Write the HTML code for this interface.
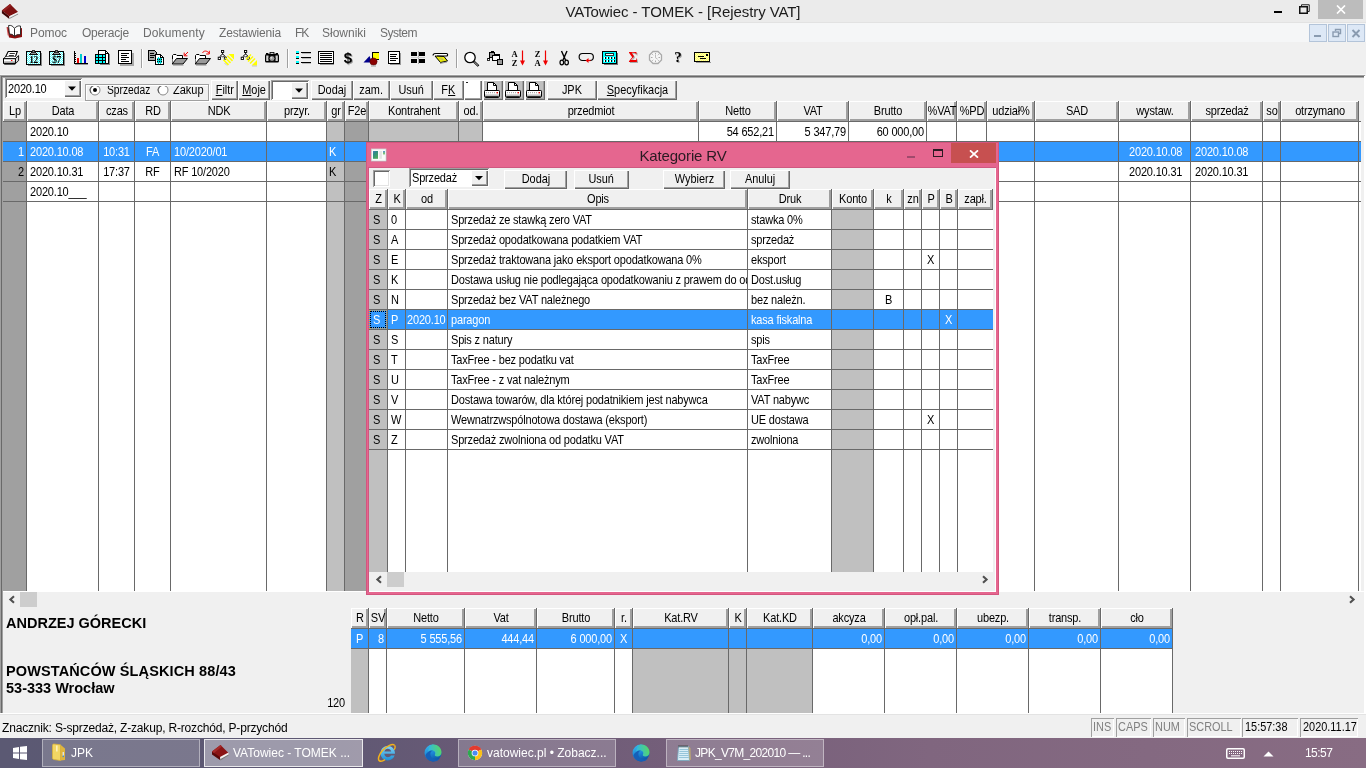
<!DOCTYPE html><html lang="pl"><head><meta charset="utf-8"><title>VATowiec - TOMEK - [Rejestry VAT]</title><style>
*{box-sizing:border-box;margin:0;padding:0}
html,body{width:1366px;height:768px;overflow:hidden;background:#f0f0f0}
body{font-family:"Liberation Sans",sans-serif;font-size:11px;color:#000;position:relative;letter-spacing:-0.18px}
#root{position:absolute;left:0;top:0;width:1366px;height:768px;overflow:hidden;will-change:transform}
.a{position:absolute;white-space:nowrap}
.t{position:absolute;white-space:nowrap;line-height:13px;height:13px}
.hd{position:absolute;background:#f0f0f0;box-shadow:inset 0 -1px 0 #696969,inset -1px 0 0 #696969,inset 1px 1px 0 #fff,inset -3px -3px 0 #a0a0a0;text-align:center;white-space:nowrap;overflow:hidden;line-height:13px;padding-top:3px;height:21px}
.btn{position:absolute;background:#f0f0f0;box-shadow:inset 1px 1px 0 #fff,inset -1px -1px 0 #696969,inset -2px -2px 0 #a0a0a0;text-align:center;white-space:nowrap;overflow:hidden;line-height:14px;font-size:13px;letter-spacing:0}
.btn b{font-weight:normal;display:inline-block;transform:scaleX(0.84);transform-origin:50% 50%}
.nx{display:inline-block;transform:scaleX(0.84);transform-origin:0 50%}
.sunk{position:absolute;background:#fff;box-shadow:inset 1px 1px 0 #a0a0a0,inset -1px -1px 0 #fff,inset 2px 2px 0 #696969,inset -2px -2px 0 #e3e3e3}
.s{transform:scaleY(1.1);transform-origin:0 0}
.hd span{display:inline-block;transform:scaleY(1.1);transform-origin:50% 0}
.vl{position:absolute;width:1px;background:#696969}
.hl{position:absolute;height:1px;background:#696969}
.w{color:#fff}
u{text-decoration:underline}
.seg{font-family:"Liberation Sans",sans-serif}
</style></head><body><div id="root">
<div class="a" style="left:0px;top:0px;width:1366px;height:22px;background:#ebebeb;"></div>
<div class="a" style="left:0px;top:22px;width:1366px;height:1px;background:#e2e2e2;"></div>
<svg class="a" style="left:0px;top:0px" width="21" height="21" viewBox="0 0 21 21">
<polygon points="1.9,10.6 10,4 18.1,11.9 9.4,16.3" fill="#7d1111"/>
<polygon points="1.9,10.6 10,4 11.5,5.4 3.6,11.9" fill="#932020"/>
<polygon points="1.9,10.6 9.4,16.3 9.4,18.9 1.9,13.2" fill="#3d0404"/>
<polygon points="9.4,16.3 18.1,11.9 18.1,14.4 9.4,18.9" fill="#f2f2f2"/>
<polygon points="9.4,17.9 18.1,13.5 18.1,14.5 9.4,19" fill="#8c8c8c"/>
</svg>
<div class="a" style="left:383px;width:600px;top:2px;height:20px;line-height:20px;text-align:center;font-size:15px;color:#1c1c1c;letter-spacing:-0.08px">VATowiec - TOMEK - [Rejestry VAT]</div>
<div class="a" style="left:1274px;top:11px;width:8px;height:2px;background:#000;"></div>
<svg class="a" style="left:1299px;top:4px" width="11" height="10" viewBox="0 0 11 10"><path d="M2.5,2.5V0.75H10.25V7.5H8.5" fill="none" stroke="#222" stroke-width="1"/><rect x="0.75" y="2.75" width="7.5" height="6.5" fill="none" stroke="#111" stroke-width="1.5"/></svg>
<div class="a" style="left:1318px;top:0px;width:45px;height:19px;background:#bcbcbc;"></div>
<svg class="a" style="left:1336px;top:5px" width="10" height="9" viewBox="0 0 10 9"><path d="M1,0.5L9,8.5M9,0.5L1,8.5" stroke="#fff" stroke-width="1.7" fill="none"/></svg>
<div class="a" style="left:0px;top:23px;width:1366px;height:19px;background:#f5f6f7;"></div>
<svg class="a" style="left:6px;top:24px" width="17" height="15" viewBox="0 0 17 15">
<path d="M1,3 L3,13.5 L9,14.5 L16,13 L16,4 L9,6 Z" fill="#8b1010"/>
<path d="M2.5,1.5 C5,1 7,2 8.5,4.5 L8.5,12.5 C7,10.5 5,9.8 3.5,10.2 Z" fill="#fff" stroke="#222" stroke-width="0.9"/>
<path d="M14.5,2 C12,1.5 10,2.5 8.5,4.5 L8.5,12.5 C10,10.8 12,10.3 14.5,10.8 Z" fill="#fff" stroke="#222" stroke-width="0.9"/>
<path d="M1,3 L2.2,11.5" stroke="#c33" stroke-width="0.8"/>
</svg>
<div class="a" style="left:30px;top:25px;height:16px;line-height:16px;font-size:12px;color:#6d6d6d;letter-spacing:-0.08px">Pomoc</div>
<div class="a" style="left:82px;top:25px;height:16px;line-height:16px;font-size:12px;color:#6d6d6d;letter-spacing:-0.21px">Operacje</div>
<div class="a" style="left:143px;top:25px;height:16px;line-height:16px;font-size:12px;color:#6d6d6d;letter-spacing:0.14px">Dokumenty</div>
<div class="a" style="left:219px;top:25px;height:16px;line-height:16px;font-size:12px;color:#6d6d6d;letter-spacing:-0.18px">Zestawienia</div>
<div class="a" style="left:295px;top:25px;height:16px;line-height:16px;font-size:12px;color:#6d6d6d;letter-spacing:-1.15px">FK</div>
<div class="a" style="left:322px;top:25px;height:16px;line-height:16px;font-size:12px;color:#6d6d6d;letter-spacing:0.00px">Słowniki</div>
<div class="a" style="left:380px;top:25px;height:16px;line-height:16px;font-size:12px;color:#6d6d6d;letter-spacing:-0.50px">System</div>
<div class="a" style="left:1309px;top:24px;width:18px;height:18px;background:#dde8f6;border:1px solid #b3c4d9;"></div>
<div class="a" style="left:1328px;top:24px;width:18px;height:18px;background:#dde8f6;border:1px solid #b3c4d9;"></div>
<div class="a" style="left:1347px;top:24px;width:18px;height:18px;background:#dde8f6;border:1px solid #b3c4d9;"></div>
<div class="a" style="left:1314px;top:35px;width:7px;height:2px;background:#8a9bb0;"></div>
<svg class="a" style="left:1332px;top:28px" width="10" height="10" viewBox="0 0 10 10"><path d="M3.5,3V1.5H8.5V5.5H7" fill="none" stroke="#8a9bb0" stroke-width="1.4"/><rect x="1" y="4" width="5.5" height="4.5" fill="none" stroke="#8a9bb0" stroke-width="1.4"/></svg>
<svg class="a" style="left:1351px;top:29px" width="10" height="9" viewBox="0 0 10 9"><path d="M1.5,1L8.5,8M8.5,1L1.5,8" stroke="#8a9bb0" stroke-width="1.9" fill="none"/></svg>
<svg class="a" style="left:3px;top:50px" width="17" height="16" viewBox="0 0 17 16"><path d="M5.2,1.5H14.3L12.4,6.8H2.6Z" fill="#fff" stroke="#000" stroke-width="1.1"/><path d="M6.6,3.5H11.8M5.8,5.5H10.9" stroke="#333" stroke-width="1"/>
<path d="M2.6,6.8L0.5,8.7H12.4L14.3,6.8" fill="#fff" stroke="#000" stroke-width="0.9"/>
<path d="M12.4,8.7L15.6,5.6V10.6L12.4,13.7Z" fill="#d4d4d4" stroke="#000" stroke-width="0.9"/>
<rect x="0.5" y="8.7" width="11.9" height="4.6" fill="#fff" stroke="#000" stroke-width="1"/>
<path d="M1.2,12H11.8" stroke="#777" stroke-width="0.9"/><rect x="8" y="10" width="1.4" height="1" fill="#e00"/>
<path d="M1.2,13.9H12.2" stroke="#000" stroke-width="1.5"/></svg>
<svg class="a" style="left:0;top:0" width="0" height="0"><defs><pattern id="dots" width="2" height="2" patternUnits="userSpaceOnUse"><rect width="1" height="1" fill="#fff"/><rect x="1" y="1" width="1" height="1" fill="#fff"/></pattern></defs></svg>
<svg class="a" style="left:26px;top:50px" width="16" height="16" viewBox="0 0 16 16" shape-rendering="crispEdges"><rect x="2" y="15" width="14" height="1" fill="#888"/><rect x="15" y="3" width="1" height="13" fill="#888"/><rect x="0.5" y="1.5" width="14" height="13" rx="1" fill="#5ff" stroke="#000" stroke-width="1.2"/><rect x="1" y="2" width="13" height="12" fill="url(#dots)"/>
<path d="M3.8,4.5L6.3,1.8H8.7L11.2,4.5Z" fill="#999" stroke="#000" stroke-width="0.9"/><rect x="6.3" y="0.4" width="2.4" height="1.6" fill="#999" stroke="#000" stroke-width="0.7"/>
<text x="7.5" y="12.8" font-family="Liberation Serif,serif" font-weight="bold" font-size="9.5" text-anchor="middle" fill="#000" style="letter-spacing:-0.4px">12</text></svg>
<svg class="a" style="left:49px;top:50px" width="16" height="16" viewBox="0 0 16 16" shape-rendering="crispEdges"><rect x="2" y="15" width="14" height="1" fill="#888"/><rect x="15" y="3" width="1" height="13" fill="#888"/><rect x="0.5" y="1.5" width="14" height="13" rx="1" fill="#5ff" stroke="#000" stroke-width="1.2"/><rect x="1" y="2" width="13" height="12" fill="url(#dots)"/>
<path d="M3.8,4.5L6.3,1.8H8.7L11.2,4.5Z" fill="#999" stroke="#000" stroke-width="0.9"/><rect x="6.3" y="0.4" width="2.4" height="1.6" fill="#999" stroke="#000" stroke-width="0.7"/>
<text x="7.5" y="12.8" font-family="Liberation Serif,serif" font-weight="bold" font-size="9.5" text-anchor="middle" fill="#000" style="letter-spacing:-0.4px">$7</text></svg>
<svg class="a" style="left:72px;top:50px" width="16" height="16" viewBox="0 0 16 16" shape-rendering="crispEdges"><rect x="2" y="1" width="1" height="13" fill="#000"/><rect x="2" y="13" width="14" height="1" fill="#000"/><rect x="3" y="14" width="13" height="1" fill="#999"/>
<rect x="3" y="3" width="1" height="1" fill="#000"/><rect x="3" y="5" width="1" height="1" fill="#000"/><rect x="3" y="7" width="1" height="1" fill="#000"/><rect x="3" y="9" width="1" height="1" fill="#000"/><rect x="3" y="11" width="1" height="1" fill="#000"/>
<rect x="5" y="8" width="2" height="5" fill="#e00"/><rect x="8" y="4" width="2" height="9" fill="#0cc"/><rect x="12" y="6" width="2" height="7" fill="#00c"/></svg>
<svg class="a" style="left:95px;top:50px" width="16" height="16" viewBox="0 0 16 16" shape-rendering="crispEdges"><path d="M3.5,0.5H10.5L13.5,3.5V13.5H3.5Z" fill="#fff" stroke="#000"/><path d="M10.5,0.5V3.5H13.5" fill="none" stroke="#000"/><rect x="14" y="4" width="1" height="11" fill="#888"/><rect x="5" y="14" width="10" height="1" fill="#888"/>
<rect x="0.5" y="4.5" width="10" height="9" fill="#0ff" stroke="#000"/><path d="M0.5,7.5H10.5M0.5,10.5H10.5M3.5,4.5V13.5M7.5,4.5V13.5" stroke="#000" stroke-width="1"/></svg>
<svg class="a" style="left:118px;top:50px" width="16" height="16" viewBox="0 0 16 16" shape-rendering="crispEdges"><rect x="2" y="14" width="14" height="2" fill="#aaa"/><rect x="14" y="3" width="2" height="12" fill="#aaa"/><rect x="0.5" y="0.5" width="13" height="13" fill="#fff" stroke="#000"/><path d="M3,3.5H11M3,5.5H9M3,7.5H11M3,9.5H8M3,11.5H11" stroke="#000" stroke-width="1"/></svg>
<svg class="a" style="left:148px;top:50px" width="16" height="16" viewBox="0 0 16 16" shape-rendering="crispEdges"><path d="M0.5,0.5H6.5L8.5,2.5V10.5H0.5Z" fill="#aaa" stroke="#000"/><path d="M2,3.5H6M2,5.5H7M2,7.5H6" stroke="#000"/>
<path d="M7.5,4.5H12.5L15.5,7.5V14.5H7.5Z" fill="#fff" stroke="#000"/><path d="M12.5,4.5V7.5H15.5" fill="none" stroke="#000"/><path d="M9,8.5H14M9,10.5H14M9,12.5H14M10.5,7V14M12.5,8V14" stroke="#0cc" stroke-width="1"/><path d="M9,9.5H14M9,11.5H14" stroke="#000" stroke-width="1" stroke-dasharray="1,1"/></svg>
<svg class="a" style="left:171px;top:50px" width="18" height="16" viewBox="0 0 18 16"><path d="M1.5,14V5.5L2.5,4.5H5L6,5.5H11.5V8.5" fill="#fff" stroke="#000"/><path d="M1.5,14L1.5,9L5,8.5Z" fill="#fff"/><path d="M5.5,8.5H16.5L12,14H1.2Z" fill="#9a9a9a" stroke="#000"/><path d="M2,15H12.5" stroke="#888"/><path d="M17,2L13.8,5.2M13.2,2.6V5.8H16.4" stroke="#e00" stroke-width="1" fill="none"/></svg>
<svg class="a" style="left:194px;top:50px" width="18" height="16" viewBox="0 0 18 16"><path d="M1.5,14V5.5L2.5,4.5H5L6,5.5H11.5V8.5" fill="#fff" stroke="#000"/><path d="M1.5,14L1.5,9L5,8.5Z" fill="#fff"/><path d="M5.5,8.5H16.5L12,14H1.2Z" fill="#9a9a9a" stroke="#000"/><path d="M2,15H12.5" stroke="#888"/><path d="M8.5,3C9.5,0.6 13,0.2 15,3.2M15.3,0.8V4H12.2" stroke="#e00" stroke-width="1" fill="none"/></svg>
<svg class="a" style="left:217px;top:50px" width="18" height="16" viewBox="0 0 18 16"><rect x="4.5" y="0.5" width="2.2" height="2" fill="#fff" stroke="#000" stroke-width="0.9"/><rect x="1.2" y="7.2" width="2.3" height="2.3" fill="#fff" stroke="#000" stroke-width="0.9"/><path d="M5.6,2.4V4L2.5,7M5.6,4L8.5,7" stroke="#000" fill="none" stroke-width="0.9"/><path d="M5.6,4L7.2,5.6L5.6,7.2L4,5.6Z" fill="#fff" stroke="#000" stroke-width="0.8"/><rect x="7.3" y="7.2" width="2" height="2" fill="#fff" stroke="#000" stroke-width="0.8"/><path d="M11.5,4H17V9.5Z" fill="#ff0"/><path d="M10.4,5.8L15.5,10.9M8.4,7.8L13.5,12.9M6.4,9.8L11.5,14.9" stroke="#ff0" stroke-width="1.5"/><path d="M7.5,13L10,15.5" stroke="#bbb" stroke-width="0.8"/></svg>
<svg class="a" style="left:240px;top:50px" width="18" height="17" viewBox="0 0 18 17"><rect x="4.5" y="0.5" width="2.2" height="2" fill="#fff" stroke="#000" stroke-width="0.9"/><rect x="1.2" y="7.2" width="2.3" height="2.3" fill="#fff" stroke="#000" stroke-width="0.9"/><path d="M5.6,2.4V4L2.5,7M5.6,4L8.5,7" stroke="#000" fill="none" stroke-width="0.9"/><path d="M5.6,4L7.2,5.6L5.6,7.2L4,5.6Z" fill="#fff" stroke="#000" stroke-width="0.8"/><rect x="7.3" y="7.2" width="2" height="2" fill="#fff" stroke="#000" stroke-width="0.8"/><path d="M17,10V15.5H11.5Z" fill="#ff0"/><path d="M10,13.5L15,8.5M8,11.5L13,6.5M6,9.5L11,4.5" stroke="#ff0" stroke-width="1.5"/><path d="M12,16H17" stroke="#bbb" stroke-width="0.8"/></svg>
<svg class="a" style="left:264px;top:50px" width="16" height="16" viewBox="0 0 16 16"><rect x="1" y="4" width="14" height="8.5" rx="1.5" fill="#000"/><rect x="5.5" y="2" width="5" height="3" rx="0.8" fill="#000"/><rect x="2" y="3" width="2.4" height="1.5" fill="#000"/><rect x="11.6" y="3" width="2.4" height="1.5" fill="#000"/><rect x="2.2" y="5.5" width="2.3" height="5.5" fill="#d0d0d0"/><rect x="11.5" y="5.5" width="2.3" height="5.5" fill="#d0d0d0"/><circle cx="8" cy="8.5" r="3" fill="#9a9a9a" stroke="#000"/><circle cx="7.3" cy="7.7" r="1" fill="#ddd"/><rect x="6.5" y="2.8" width="3" height="1.2" fill="#ccc"/></svg>
<svg class="a" style="left:295px;top:50px" width="16" height="16" viewBox="0 0 16 16" shape-rendering="crispEdges"><rect x="1" y="1" width="3" height="3" fill="#0ff"/><rect x="1" y="6" width="3" height="3" fill="#0ff"/><rect x="1" y="11" width="3" height="3" fill="#0ff"/><rect x="1" y="3" width="3" height="1" fill="#000"/><rect x="1" y="8" width="3" height="1" fill="#000"/><rect x="1" y="13" width="3" height="1" fill="#000"/>
<rect x="6" y="2" width="10" height="1" fill="#000"/><rect x="6" y="7" width="10" height="1" fill="#000"/><rect x="6" y="12" width="10" height="1" fill="#000"/><rect x="7" y="3" width="9" height="1" fill="#bbb"/><rect x="7" y="8" width="9" height="1" fill="#bbb"/><rect x="7" y="13" width="9" height="1" fill="#bbb"/></svg>
<svg class="a" style="left:318px;top:50px" width="16" height="16" viewBox="0 0 16 16" shape-rendering="crispEdges"><rect x="0.5" y="1.5" width="15" height="12" rx="1" fill="#fff" stroke="#000"/><path d="M2,3.5H14M2,5.5H14M2,7.5H14M2,9.5H14M2,11.5H14" stroke="#000"/><rect x="2" y="14" width="14" height="1" fill="#999"/></svg>
<div class="a" style="left:341px;top:48px;width:14px;height:20px;line-height:20px;font-size:15px;font-weight:bold;text-align:center;letter-spacing:0;color:#000;text-shadow:1px 1px 0 #999">$</div>
<svg class="a" style="left:363px;top:51px" width="16" height="16" viewBox="0 0 16 16"><rect x="9.5" y="1.5" width="7" height="7" fill="#ff0" stroke="#000"/><path d="M0.5,11.5L6.5,5L9,11.5Z" fill="#00008b"/><circle cx="10.5" cy="10.5" r="3.6" fill="#8b0000" stroke="#500" stroke-width="0.6"/><path d="M8,15L13,15" stroke="#999"/></svg>
<svg class="a" style="left:386px;top:50px" width="16" height="16" viewBox="0 0 16 16" shape-rendering="crispEdges"><rect x="14" y="3" width="1" height="12" fill="#999"/><rect x="4" y="14" width="11" height="1" fill="#999"/><rect x="2.5" y="1.5" width="11" height="12" fill="#fff" stroke="#000" stroke-width="1.4"/><path d="M4,4.5H11M4,6.5H10M4,8.5H12M4,10.5H10" stroke="#000"/></svg>
<svg class="a" style="left:409px;top:50px" width="16" height="16" viewBox="0 0 16 16" shape-rendering="crispEdges"><rect x="2" y="2" width="6" height="4" fill="#000"/><rect x="10" y="2" width="6" height="4" fill="#000"/><rect x="2" y="9" width="6" height="4" fill="#000"/><rect x="10" y="9" width="6" height="4" fill="#000"/><rect x="9" y="1" width="1" height="13" fill="#aaa"/><rect x="2" y="7" width="14" height="1" fill="#ccc"/></svg>
<svg class="a" style="left:431px;top:50px" width="18" height="16" viewBox="0 0 18 16"><path d="M2,5.5C2,3.5 4,3.5 5,3.5H15.5C17,3.5 17,6 15.5,6H6" fill="#fff" stroke="#000" stroke-width="1.2"/><path d="M4,6L13,6.5L16.5,11L9.5,12.5Z" fill="#ee0" stroke="#000" stroke-width="1"/><path d="M8,8L12,10M10,7.5L13,10.5" stroke="#aa8" stroke-width="0.8"/><path d="M9,13.5L16,12" stroke="#999"/></svg>
<svg class="a" style="left:462px;top:51px" width="18" height="16" viewBox="0 0 18 16"><circle cx="8" cy="6.5" r="5.2" fill="#fff" stroke="#000" stroke-width="1.3"/><path d="M11.8,10.5L16.5,15" stroke="#000" stroke-width="2.4"/><path d="M12.3,11L16,14.5" stroke="#fff" stroke-width="0.8"/></svg>
<svg class="a" style="left:487px;top:50px" width="18" height="16" viewBox="0 0 18 16" shape-rendering="crispEdges"><path d="M1.5,9.5V8.5H2.5M4,4.5H12.5V9" fill="none" stroke="#000"/><rect x="2.5" y="2.5" width="5" height="5" fill="#999" stroke="#000"/><rect x="4" y="1" width="3" height="1" fill="#000"/><rect x="5.5" y="5.5" width="7" height="5" fill="#fff" stroke="#000"/><rect x="10.5" y="9.5" width="5" height="5" fill="#999" stroke="#000"/><rect x="0.5" y="8.5" width="2" height="2" fill="#fff" stroke="#000" stroke-width="0.8"/></svg>
<svg class="a" style="left:510px;top:50px" width="16" height="16" viewBox="0 0 16 16"><text x="4.5" y="7" font-family="Liberation Serif,serif" font-weight="bold" font-size="8.5" text-anchor="middle">A</text><text x="4.5" y="15.5" font-family="Liberation Serif,serif" font-weight="bold" font-size="8.5" text-anchor="middle">Z</text><path d="M12.5,0.5V14" stroke="#e00" stroke-width="1.2"/><path d="M10,10.5H15L12.5,15.5Z" fill="#e00"/></svg>
<svg class="a" style="left:533px;top:50px" width="16" height="16" viewBox="0 0 16 16"><text x="4.5" y="7" font-family="Liberation Serif,serif" font-weight="bold" font-size="8.5" text-anchor="middle">Z</text><text x="4.5" y="15.5" font-family="Liberation Serif,serif" font-weight="bold" font-size="8.5" text-anchor="middle">A</text><path d="M12.5,0.5V14" stroke="#e00" stroke-width="1.2"/><path d="M10,10.5H15L12.5,15.5Z" fill="#e00"/></svg>
<svg class="a" style="left:556px;top:50px" width="16" height="16" viewBox="0 0 16 16"><path d="M5.5,1L9.5,10M11,1L7,10" stroke="#000" stroke-width="1.4" fill="none"/><ellipse cx="5.8" cy="12.5" rx="1.8" ry="2.3" fill="none" stroke="#000" stroke-width="1.2"/><ellipse cx="10.6" cy="12.5" rx="1.8" ry="2.3" fill="none" stroke="#000" stroke-width="1.2"/></svg>
<svg class="a" style="left:578px;top:50px" width="18" height="16" viewBox="0 0 18 16"><path d="M8,10.5H4.5C0,10.5 0,3.5 4.5,3.5H12C16.5,3.5 16.5,10.5 12,10.5" fill="none" stroke="#000" stroke-width="1.15"/><path d="M12.5,10.5H9" stroke="#e00" stroke-width="1.3"/><path d="M10.5,8L7.5,10.5L10.5,13Z" fill="#e00"/></svg>
<svg class="a" style="left:602px;top:50px" width="16" height="16" viewBox="0 0 16 16" shape-rendering="crispEdges"><rect x="2" y="14" width="14" height="1" fill="#777"/><rect x="15" y="3" width="1" height="12" fill="#777"/><rect x="0.5" y="1.5" width="14" height="12" fill="#0ff" stroke="#000" stroke-width="1.4"/><rect x="3.5" y="3.5" width="8" height="2" fill="#fff" stroke="#000" stroke-width="0.8"/>
<g fill="#000"><rect x="3" y="7" width="1" height="2"/><rect x="6" y="7" width="1" height="2"/><rect x="9" y="7" width="1" height="2"/><rect x="12" y="7" width="1" height="2"/><rect x="3" y="10" width="1" height="2"/><rect x="6" y="10" width="1" height="2"/><rect x="9" y="10" width="1" height="2"/><rect x="12" y="10" width="1" height="2"/></g>
<g fill="#fff"><rect x="2" y="7" width="1" height="2"/><rect x="5" y="7" width="1" height="2"/><rect x="8" y="7" width="1" height="2"/><rect x="11" y="7" width="1" height="2"/><rect x="2" y="10" width="1" height="2"/><rect x="5" y="10" width="1" height="2"/><rect x="8" y="10" width="1" height="2"/><rect x="11" y="10" width="1" height="2"/></g></svg>
<div class="a" style="left:626px;top:47px;width:14px;height:22px;line-height:22px;font-size:14px;font-weight:bold;font-family:'Liberation Serif',serif;text-align:center;letter-spacing:0;color:#e00;text-shadow:1px 1px 0 #aaa">Σ</div>
<svg class="a" style="left:648px;top:50px" width="16" height="16" viewBox="0 0 16 16"><path d="M5,1.5H10L13.5,5V10L10,13.5H5L1.5,10V5Z" fill="#f6f6f6" stroke="#aaa" stroke-width="1.3"/><path d="M7.5,3V4.5M7.5,10.5V12M3,7.5H4.5M10.5,7.5H12M4.3,4.3L5.2,5.2M10.7,4.3L9.8,5.2M4.3,10.7L5.2,9.8M10.7,10.7L9.8,9.8" stroke="#aaa"/><path d="M7.5,5V7.8L9.5,9" stroke="#bbb" fill="none"/></svg>
<div class="a" style="left:671px;top:47px;width:14px;height:20px;line-height:20px;font-size:15px;font-weight:bold;font-family:'Liberation Serif',serif;text-align:center;letter-spacing:0;color:#000;text-shadow:1px 1px 0 #aaa">?</div>
<svg class="a" style="left:694px;top:52px" width="18" height="12" viewBox="0 0 18 12" shape-rendering="crispEdges"><rect x="2" y="10" width="15" height="1" fill="#999"/><rect x="0.5" y="0.5" width="15" height="9" fill="#ff6" stroke="#000" stroke-width="1.4"/><rect x="1" y="1" width="14" height="8" fill="url(#dots)" opacity="0.5"/><rect x="12" y="2" width="2" height="2" fill="#000"/><path d="M4,4.5H10M6,6.5H12" stroke="#000"/></svg>
<div class="a" style="left:141px;top:49px;width:1px;height:19px;background:#a0a0a0;"></div>
<div class="a" style="left:142px;top:49px;width:1px;height:19px;background:#fff;"></div>
<div class="a" style="left:287px;top:49px;width:1px;height:19px;background:#a0a0a0;"></div>
<div class="a" style="left:288px;top:49px;width:1px;height:19px;background:#fff;"></div>
<div class="a" style="left:456px;top:49px;width:1px;height:19px;background:#a0a0a0;"></div>
<div class="a" style="left:457px;top:49px;width:1px;height:19px;background:#fff;"></div>
<div class="a" style="left:0px;top:74px;width:1366px;height:1px;background:#f8f8f8;"></div>
<div class="a" style="left:0px;top:75px;width:1365px;height:1px;background:#a0a0a0;"></div>
<div class="a" style="left:1px;top:76px;width:1364px;height:1px;background:#696969;"></div>
<div class="a" style="left:2px;top:77px;width:1362px;height:1px;background:#a8a8a8;"></div>
<div class="a" style="left:0px;top:75px;width:1px;height:638px;background:#a0a0a0;"></div>
<div class="a" style="left:1px;top:76px;width:1px;height:637px;background:#696969;"></div>
<div class="a" style="left:1364px;top:76px;width:2px;height:638px;background:#fff;"></div>
<div class="a" style="left:0px;top:713px;width:1366px;height:1px;background:#fff;"></div>
<div class="a" style="left:0px;top:714px;width:1366px;height:1px;background:#e3e3e3;"></div>
<div class="a" style="left:2px;top:77px;width:1px;height:636px;background:#a0a0a0;"></div>
<div class="a" style="left:5px;top:78px;width:77px;height:20px;background:#fff;box-shadow:inset 1px 1px 0 #a0a0a0,inset -1px -1px 0 #fff,inset 2px 2px 0 #696969"></div>
<div class="btn" style="left:64px;top:80px;width:17px;height:17px"></div>
<svg class="a" style="left:64px;top:80px" width="17" height="17" viewBox="0 0 17 17"><polygon points="4.0,6.5 12.0,6.5 8.0,10.8" fill="#000"/></svg>
<div class="t s" style="left:8px;top:82px">2020.10</div>
<div class="a" style="left:85px;top:84px;width:124px;height:17px;border:1px solid #a0a0a0;box-shadow:inset 1px 1px 0 #fff,1px 1px 0 #fff;"></div>
<div class="a" style="left:87px;top:86px;width:120px;height:13px;overflow:hidden">
<svg class="a" style="left:2px;top:-2px" width="12" height="12" viewBox="0 0 12 12"><circle cx="6" cy="6" r="5" fill="#fff" stroke="#888" stroke-width="1"/><path d="M2.2,9.2A5,5 0 0 1 9.2,2.2" fill="none" stroke="#555" stroke-width="1"/><circle cx="6" cy="6" r="2" fill="#000"/></svg>
<div class="t" style="left:20px;top:-2.5px;font-size:12.5px;letter-spacing:0"><span class="nx" style="transform:scaleX(0.82)">Sprzedaż</span></div>
<svg class="a" style="left:70px;top:-2px" width="12" height="12" viewBox="0 0 12 12"><circle cx="6" cy="6" r="5" fill="#fff" stroke="#888" stroke-width="1"/><path d="M2.2,9.2A5,5 0 0 1 9.2,2.2" fill="none" stroke="#555" stroke-width="1"/></svg>
<div class="t" style="left:86px;top:-2.5px;font-size:12.5px;letter-spacing:0"><span class="nx" style="transform:scaleX(0.88)">Zakup</span></div>
</div>
<div class="btn" style="left:211px;top:80px;width:27px;height:20px;padding-top:3px"><b><u>F</u>iltr</b></div>
<div class="btn" style="left:238px;top:80px;width:32px;height:20px;padding-top:3px"><b><u>M</u>oje</b></div>
<div class="a" style="left:271px;top:80px;width:38px;height:20px;background:#fff;box-shadow:inset 1px 1px 0 #a0a0a0,inset -1px -1px 0 #fff,inset 2px 2px 0 #696969"></div>
<div class="btn" style="left:291px;top:82px;width:17px;height:17px"></div>
<svg class="a" style="left:291px;top:82px" width="17" height="17" viewBox="0 0 17 17"><polygon points="4.0,6.5 12.0,6.5 8.0,10.8" fill="#000"/></svg>
<div class="btn" style="left:311px;top:80px;width:42px;height:20px;padding-top:3px"><b>Dodaj</b></div>
<div class="btn" style="left:353px;top:80px;width:37px;height:20px;padding-top:3px"><b>zam.</b></div>
<div class="btn" style="left:390px;top:80px;width:43px;height:20px;padding-top:3px"><b>Usuń</b></div>
<div class="btn" style="left:433px;top:80px;width:31px;height:20px;padding-top:3px"><b>F<u>K</u></b></div>
<div class="btn" style="left:464px;top:80px;width:18px;height:20px;background:#fff"></div>
<div class="a" style="left:466px;top:82px;width:2px;height:1px;background:#222;"></div>
<div class="btn" style="left:483px;top:80px;width:20px;height:20px;background:#c0c0c0"></div>
<svg class="a" style="left:483px;top:81px" width="18" height="18" viewBox="0 0 18 18"><path d="M4.5,9.5V1.5H10.5L13.5,4.5V9.5" fill="#fff" stroke="#000" stroke-width="1"/><path d="M10.5,1.5V4.5H13.5" fill="none" stroke="#000" stroke-width="1"/><rect x="1.5" y="9.5" width="15" height="6.5" rx="0.8" fill="#c0c0c0" stroke="#000" stroke-width="1"/><rect x="2" y="10" width="14" height="3.4" fill="#fff"/><path d="M3,11.7H13.5" stroke="#aaa" stroke-width="1.2" stroke-dasharray="1,1"/><rect x="13.6" y="11" width="1.4" height="1.4" fill="#e00"/><path d="M2.5,16.2H15.5" stroke="#000" stroke-width="1.4"/></svg>
<div class="btn" style="left:504px;top:80px;width:20px;height:20px;background:#c0c0c0"></div>
<svg class="a" style="left:504px;top:81px" width="18" height="18" viewBox="0 0 18 18"><path d="M4.5,9.5V1.5H10.5L13.5,4.5V9.5" fill="#fff" stroke="#000" stroke-width="1"/><path d="M10.5,1.5V4.5H13.5" fill="none" stroke="#000" stroke-width="1"/><rect x="1.5" y="9.5" width="15" height="6.5" rx="0.8" fill="#c0c0c0" stroke="#000" stroke-width="1"/><rect x="2" y="10" width="14" height="3.4" fill="#fff"/><path d="M3,11.7H13.5" stroke="#aaa" stroke-width="1.2" stroke-dasharray="1,1"/><rect x="13.6" y="11" width="1.4" height="1.4" fill="#e00"/><path d="M2.5,16.2H15.5" stroke="#000" stroke-width="1.4"/></svg>
<div class="btn" style="left:525px;top:80px;width:20px;height:20px;background:#c0c0c0"></div>
<svg class="a" style="left:525px;top:81px" width="18" height="18" viewBox="0 0 18 18"><path d="M4.5,9.5V1.5H10.5L13.5,4.5V9.5" fill="#fff" stroke="#000" stroke-width="1"/><path d="M10.5,1.5V4.5H13.5" fill="none" stroke="#000" stroke-width="1"/><rect x="1.5" y="9.5" width="15" height="6.5" rx="0.8" fill="#c0c0c0" stroke="#000" stroke-width="1"/><rect x="2" y="10" width="14" height="3.4" fill="#fff"/><path d="M3,11.7H13.5" stroke="#aaa" stroke-width="1.2" stroke-dasharray="1,1"/><rect x="13.6" y="11" width="1.4" height="1.4" fill="#e00"/><path d="M2.5,16.2H15.5" stroke="#000" stroke-width="1.4"/></svg>
<div class="btn" style="left:547px;top:80px;width:50px;height:20px;padding-top:3px"><b>JPK</b></div>
<div class="btn" style="left:597px;top:80px;width:80px;height:20px;padding-top:3px"><b><u>S</u>pecyfikacja</b></div>
<div class="a" style="left:3px;top:101px;width:1358px;height:490px;background:#fff;"></div>
<div class="a" style="left:3px;top:122px;width:23px;height:469px;background:#a0a0a0;"></div>
<div class="a" style="left:327px;top:122px;width:17px;height:469px;background:#c0c0c0;"></div>
<div class="a" style="left:345px;top:122px;width:23px;height:469px;background:#a0a0a0;"></div>
<div class="a" style="left:369px;top:122px;width:89px;height:469px;background:#c0c0c0;"></div>
<div class="a" style="left:459px;top:122px;width:23px;height:469px;background:#c0c0c0;"></div>
<div class="a" style="left:3px;top:142px;width:1358px;height:19px;background:#3399ff;"></div>
<div class="vl" style="left:26px;top:121px;height:470px"></div>
<div class="vl" style="left:98px;top:121px;height:470px"></div>
<div class="vl" style="left:134px;top:121px;height:470px"></div>
<div class="vl" style="left:170px;top:121px;height:470px"></div>
<div class="vl" style="left:266px;top:121px;height:470px"></div>
<div class="vl" style="left:326px;top:121px;height:470px"></div>
<div class="vl" style="left:344px;top:121px;height:470px"></div>
<div class="vl" style="left:368px;top:121px;height:470px"></div>
<div class="vl" style="left:458px;top:121px;height:470px"></div>
<div class="vl" style="left:482px;top:121px;height:470px"></div>
<div class="vl" style="left:698px;top:121px;height:470px"></div>
<div class="vl" style="left:776px;top:121px;height:470px"></div>
<div class="vl" style="left:848px;top:121px;height:470px"></div>
<div class="vl" style="left:926px;top:121px;height:470px"></div>
<div class="vl" style="left:956px;top:121px;height:470px"></div>
<div class="vl" style="left:986px;top:121px;height:470px"></div>
<div class="vl" style="left:1034px;top:121px;height:470px"></div>
<div class="vl" style="left:1118px;top:121px;height:470px"></div>
<div class="vl" style="left:1190px;top:121px;height:470px"></div>
<div class="vl" style="left:1262px;top:121px;height:470px"></div>
<div class="vl" style="left:1280px;top:121px;height:470px"></div>
<div class="vl" style="left:1358px;top:121px;height:470px"></div>
<div class="hl" style="left:3px;top:121px;width:1358px"></div>
<div class="hl" style="left:3px;top:141px;width:1358px"></div>
<div class="hl" style="left:3px;top:161px;width:1358px"></div>
<div class="hl" style="left:3px;top:181px;width:1358px"></div>
<div class="hl" style="left:3px;top:201px;width:1358px"></div>
<div class="hd" style="left:3px;top:101px;width:24px"><span>Lp</span></div>
<div class="hd" style="left:27px;top:101px;width:72px"><span>Data</span></div>
<div class="hd" style="left:99px;top:101px;width:36px"><span>czas</span></div>
<div class="hd" style="left:135px;top:101px;width:36px"><span>RD</span></div>
<div class="hd" style="left:171px;top:101px;width:96px"><span>NDK</span></div>
<div class="hd" style="left:267px;top:101px;width:60px"><span>przyr.</span></div>
<div class="hd" style="left:327px;top:101px;width:18px"><span>gr</span></div>
<div class="hd" style="left:345px;top:101px;width:24px"><span>F2e</span></div>
<div class="hd" style="left:369px;top:101px;width:90px"><span>Kontrahent</span></div>
<div class="hd" style="left:459px;top:101px;width:24px"><span>od.</span></div>
<div class="hd" style="left:483px;top:101px;width:216px"><span>przedmiot</span></div>
<div class="hd" style="left:699px;top:101px;width:78px"><span>Netto</span></div>
<div class="hd" style="left:777px;top:101px;width:72px"><span>VAT</span></div>
<div class="hd" style="left:849px;top:101px;width:78px"><span>Brutto</span></div>
<div class="hd" style="left:927px;top:101px;width:30px"><span>%VAT</span></div>
<div class="hd" style="left:957px;top:101px;width:30px"><span>%PD</span></div>
<div class="hd" style="left:987px;top:101px;width:48px"><span>udział%</span></div>
<div class="hd" style="left:1035px;top:101px;width:84px"><span>SAD</span></div>
<div class="hd" style="left:1119px;top:101px;width:72px"><span>wystaw.</span></div>
<div class="hd" style="left:1191px;top:101px;width:72px"><span>sprzedaż</span></div>
<div class="hd" style="left:1263px;top:101px;width:18px"><span>so</span></div>
<div class="hd" style="left:1281px;top:101px;width:78px"><span>otrzymano</span></div>
<div class="a" style="left:1359px;top:101px;width:2px;height:20px;background:#f0f0f0;"></div>
<div class="t s" style="left:30px;top:125px;">2020.10</div>
<div class="t s" style="right:592px;top:125px;">54 652,21</div>
<div class="t s" style="right:520px;top:125px;">5 347,79</div>
<div class="t s" style="right:442px;top:125px;">60 000,00</div>
<div class="t s" style="right:1342px;top:145px;color:#fff;">1</div>
<div class="t s" style="left:30px;top:145px;color:#fff;">2020.10.08</div>
<div class="t s" style="left:-33.5px;width:300px;text-align:center;top:145px;color:#fff;">10:31</div>
<div class="t s" style="left:2.5px;width:300px;text-align:center;top:145px;color:#fff;">FA</div>
<div class="t s" style="left:174px;top:145px;color:#fff;">10/2020/01</div>
<div class="t s" style="left:329px;top:145px;color:#fff;">K</div>
<div class="t s" style="left:1129px;top:145px;color:#fff;">2020.10.08</div>
<div class="t s" style="left:1195px;top:145px;color:#fff;">2020.10.08</div>
<div class="t s" style="right:1342px;top:165px;">2</div>
<div class="t s" style="left:30px;top:165px;">2020.10.31</div>
<div class="t s" style="left:-33.5px;width:300px;text-align:center;top:165px;">17:37</div>
<div class="t s" style="left:2.5px;width:300px;text-align:center;top:165px;">RF</div>
<div class="t s" style="left:174px;top:165px;">RF 10/2020</div>
<div class="t s" style="left:329px;top:165px;">K</div>
<div class="t s" style="left:1129px;top:165px;">2020.10.31</div>
<div class="t s" style="left:1195px;top:165px;">2020.10.31</div>
<div class="t s" style="left:30px;top:185px;">2020.10___</div>
<div class="a" style="left:3px;top:591px;width:1361px;height:1px;background:#fff;"></div>
<div class="a" style="left:3px;top:592px;width:1361px;height:16px;background:#f0f0f0;"></div>
<div class="a" style="left:20px;top:592px;width:17px;height:15px;background:#cdcdcd;"></div>
<svg class="a" style="left:8px;top:595px" width="8" height="9" viewBox="0 0 8 9"><path d="M6,1.2L2.4,4.5L6,7.8" fill="none" stroke="#505050" stroke-width="2.1"/></svg>
<svg class="a" style="left:1348px;top:595px" width="8" height="9" viewBox="0 0 8 9"><path d="M2,1.2L5.6,4.5L2,7.8" fill="none" stroke="#505050" stroke-width="2.1"/></svg>
<div class="t" style="left:6px;top:615px;font-weight:bold;font-size:14.5px;line-height:16px;height:16px;letter-spacing:0;">ANDRZEJ GÓRECKI</div>
<div class="t" style="left:6px;top:663px;font-weight:bold;font-size:14.5px;line-height:16px;height:16px;letter-spacing:0;letter-spacing:0.12px;">POWSTAŃCÓW ŚLĄSKICH 88/43</div>
<div class="t" style="left:6px;top:680px;font-weight:bold;font-size:14.5px;line-height:16px;height:16px;letter-spacing:0;">53-333 Wrocław</div>
<div class="t s" style="right:1021px;top:696px;">120</div>
<div class="a" style="left:351px;top:608px;width:822px;height:105px;background:#fff;"></div>
<div class="a" style="left:351px;top:629px;width:17px;height:84px;background:#c0c0c0;"></div>
<div class="a" style="left:633px;top:629px;width:95px;height:84px;background:#c0c0c0;"></div>
<div class="a" style="left:729px;top:629px;width:17px;height:84px;background:#c0c0c0;"></div>
<div class="a" style="left:747px;top:629px;width:65px;height:84px;background:#c0c0c0;"></div>
<div class="a" style="left:351px;top:629px;width:821px;height:19px;background:#3399ff;"></div>
<div class="vl" style="left:368px;top:628px;height:85px"></div>
<div class="vl" style="left:386px;top:628px;height:85px"></div>
<div class="vl" style="left:464px;top:628px;height:85px"></div>
<div class="vl" style="left:536px;top:628px;height:85px"></div>
<div class="vl" style="left:614px;top:628px;height:85px"></div>
<div class="vl" style="left:632px;top:628px;height:85px"></div>
<div class="vl" style="left:728px;top:628px;height:85px"></div>
<div class="vl" style="left:746px;top:628px;height:85px"></div>
<div class="vl" style="left:812px;top:628px;height:85px"></div>
<div class="vl" style="left:884px;top:628px;height:85px"></div>
<div class="vl" style="left:956px;top:628px;height:85px"></div>
<div class="vl" style="left:1028px;top:628px;height:85px"></div>
<div class="vl" style="left:1100px;top:628px;height:85px"></div>
<div class="vl" style="left:1172px;top:628px;height:85px"></div>
<div class="hl" style="left:351px;top:628px;width:822px"></div>
<div class="hl" style="left:351px;top:648px;width:822px"></div>
<div class="hd" style="left:351px;top:608px;width:18px"><span>R</span></div>
<div class="hd" style="left:369px;top:608px;width:18px"><span>SV</span></div>
<div class="hd" style="left:387px;top:608px;width:78px"><span>Netto</span></div>
<div class="hd" style="left:465px;top:608px;width:72px"><span>Vat</span></div>
<div class="hd" style="left:537px;top:608px;width:78px"><span>Brutto</span></div>
<div class="hd" style="left:615px;top:608px;width:18px"><span>r.</span></div>
<div class="hd" style="left:633px;top:608px;width:96px"><span>Kat.RV</span></div>
<div class="hd" style="left:729px;top:608px;width:18px"><span>K</span></div>
<div class="hd" style="left:747px;top:608px;width:66px"><span>Kat.KD</span></div>
<div class="hd" style="left:813px;top:608px;width:72px"><span>akcyza</span></div>
<div class="hd" style="left:885px;top:608px;width:72px"><span>opł.pal.</span></div>
<div class="hd" style="left:957px;top:608px;width:72px"><span>ubezp.</span></div>
<div class="hd" style="left:1029px;top:608px;width:72px"><span>transp.</span></div>
<div class="hd" style="left:1101px;top:608px;width:72px"><span>cło</span></div>
<div class="t s" style="left:209.5px;width:300px;text-align:center;top:632px;color:#fff;">P</div>
<div class="t s" style="right:982px;top:632px;color:#fff;">8</div>
<div class="t s" style="right:904px;top:632px;color:#fff;">5 555,56</div>
<div class="t s" style="right:832px;top:632px;color:#fff;">444,44</div>
<div class="t s" style="right:754px;top:632px;color:#fff;">6 000,00</div>
<div class="t s" style="left:473.5px;width:300px;text-align:center;top:632px;color:#fff;">X</div>
<div class="t s" style="right:484px;top:632px;color:#fff;">0,00</div>
<div class="t s" style="right:412px;top:632px;color:#fff;">0,00</div>
<div class="t s" style="right:340px;top:632px;color:#fff;">0,00</div>
<div class="t s" style="right:268px;top:632px;color:#fff;">0,00</div>
<div class="t s" style="right:196px;top:632px;color:#fff;">0,00</div>
<div class="a" style="left:0px;top:715px;width:1366px;height:23px;background:#f0f0f0;"></div>
<div class="a" style="left:2px;top:721px;height:15px;line-height:15px;font-size:12px;letter-spacing:-0.18px">Znacznik: S-sprzedaż, Z-zakup, R-rozchód, P-przychód</div>
<div class="a" style="left:1091px;top:718px;width:23px;height:19px;box-shadow:inset 1px 1px 0 #a0a0a0,inset -1px -1px 0 #fff;padding:2px 0 0 1.5px;line-height:14px;font-size:13px;color:#808080;letter-spacing:0"><span class="nx">INS</span></div>
<div class="a" style="left:1116px;top:718px;width:35px;height:19px;box-shadow:inset 1px 1px 0 #a0a0a0,inset -1px -1px 0 #fff;padding:2px 0 0 1.5px;line-height:14px;font-size:13px;color:#808080;letter-spacing:0"><span class="nx">CAPS</span></div>
<div class="a" style="left:1153px;top:718px;width:32px;height:19px;box-shadow:inset 1px 1px 0 #a0a0a0,inset -1px -1px 0 #fff;padding:2px 0 0 1.5px;line-height:14px;font-size:13px;color:#808080;letter-spacing:0"><span class="nx">NUM</span></div>
<div class="a" style="left:1187px;top:718px;width:54px;height:19px;box-shadow:inset 1px 1px 0 #a0a0a0,inset -1px -1px 0 #fff;padding:2px 0 0 1.5px;line-height:14px;font-size:13px;color:#808080;letter-spacing:0"><span class="nx">SCROLL</span></div>
<div class="a" style="left:1242px;top:718px;width:56px;height:19px;box-shadow:inset 1px 1px 0 #a0a0a0,inset -1px -1px 0 #fff;padding:2px 0 0 3px;line-height:14px;font-size:13px;color:#000;letter-spacing:0"><span class="nx">15:57:38</span></div>
<div class="a" style="left:1300px;top:718px;width:58px;height:19px;box-shadow:inset 1px 1px 0 #a0a0a0,inset -1px -1px 0 #fff;padding:2px 0 0 3px;line-height:14px;font-size:13px;color:#000;letter-spacing:0"><span class="nx">2020.11.17</span></div>
<div class="a" style="left:0px;top:738px;width:1366px;height:30px;background:linear-gradient(90deg,#5b5973 0%,#5d5873 22%,#6a5a76 36%,#755f7a 50%,#80667f 68%,#886c83 100%);"></div>
<svg class="a" style="left:13px;top:746px" width="14" height="14" viewBox="0 0 14 14"><path d="M0,2 L6,1 V6.5 H0Z M7,0.8 L14,0 V6.5 H7Z M0,7.5 H6 V13 L0,12Z M7,7.5 H14 V14 L7,13.2Z" fill="#fff"/></svg>
<div class="a" style="left:42px;top:739px;width:158px;height:28px;background:rgba(255,255,255,0.19);border:1px solid rgba(255,255,255,0.42);"></div>
<div class="a" style="left:204px;top:739px;width:159px;height:28px;background:rgba(255,255,255,0.40);border:1px solid rgba(255,255,255,0.78);"></div>
<div class="a" style="left:458px;top:739px;width:158px;height:28px;background:rgba(255,255,255,0.19);border:1px solid rgba(255,255,255,0.42);"></div>
<div class="a" style="left:666px;top:739px;width:158px;height:28px;background:rgba(255,255,255,0.19);border:1px solid rgba(255,255,255,0.42);"></div>
<div class="t" style="left:71px;top:745px;color:#fff;font-size:12px;line-height:16px;height:16px;letter-spacing:0;">JPK</div>
<div class="t" style="left:233px;top:745px;color:#fff;font-size:12px;line-height:16px;height:16px;letter-spacing:0;">VATowiec - TOMEK ...</div>
<div class="t" style="left:487px;top:745px;color:#fff;font-size:12px;line-height:16px;height:16px;letter-spacing:0;">vatowiec.pl • Zobacz...</div>
<div class="t" style="left:695px;top:745px;color:#fff;font-size:12px;line-height:16px;height:16px;letter-spacing:0;letter-spacing:-0.68px;">JPK_V7M_202010 — ...</div>
<div class="t" style="left:1305px;top:745px;color:#fff;font-size:12px;line-height:16px;height:16px;letter-spacing:0;letter-spacing:-0.55px;">15:57</div>
<svg class="a" style="left:51px;top:743px" width="16" height="19" viewBox="0 0 16 19"><path d="M1.5,2.5C1.5,1.5 2,1 3,1L9.5,1.8V17.5L3,16.5C2,16.4 1.5,16 1.5,15Z" fill="#f3d663" stroke="#d9b23a" stroke-width="0.8"/><path d="M9.5,1.8L14,5.5V17L9.5,17.5Z" fill="#e0b53d"/><rect x="5.2" y="2.5" width="1.3" height="6" fill="#fff7d0"/><rect x="11.6" y="9" width="1.3" height="4" fill="#dfeaf6"/><rect x="11.6" y="12.5" width="1.3" height="1.6" fill="#3a8ad8"/></svg>
<svg class="a" style="left:211px;top:744px" width="19" height="17" viewBox="0 0 19 17"><polygon points="1,7.5 9.5,1 18,9.5 9.5,15" fill="#8b1515"/><polygon points="1,7.5 9,13 9,16 1,10.5" fill="#5a0808"/><polygon points="9,13 17.5,8.5 18,11 9.5,16" fill="#f3f3f3"/><polygon points="9,15.3 18,10.3 18,11.3 9.5,16.5" fill="#777"/><polygon points="1,7.5 9.5,1 11,2.5 3,9" fill="#a52a2a"/></svg>
<svg class="a" style="left:377px;top:743px" width="20" height="20" viewBox="0 0 20 20"><defs><linearGradient id="ieg" x1="0" y1="0" x2="0" y2="1"><stop offset="0" stop-color="#7fd4f7"/><stop offset="1" stop-color="#1e8fd6"/></linearGradient></defs><path d="M18,10.8H7.3C7.5,13 9,14.2 10.9,14.2C12.3,14.2 13.4,13.6 14,12.6H17.6C16.7,15.6 14.1,17.4 10.8,17.4C6.6,17.4 3.6,14.4 3.6,10.2C3.6,6 6.6,3 10.7,3C15.2,3 18.1,6.2 18,10.8ZM7.4,8.6H14.2C13.9,6.8 12.6,5.7 10.8,5.7C9,5.7 7.8,6.8 7.4,8.6Z" fill="url(#ieg)"/><path d="M17.5,2.2C15.5,0.5 10,2.5 5.5,7.5C2,11.5 0.5,16 2.2,17.6C3.5,18.8 6,18 8,16.6" fill="none" stroke="#f3b21b" stroke-width="1.5"/><path d="M17.5,2.2C18.6,3.2 18.2,5 17.2,6.8" fill="none" stroke="#f3b21b" stroke-width="1.3"/></svg>
<svg class="a" style="left:424px;top:744px" width="18" height="18" viewBox="0 0 18 18"><defs><linearGradient id="eg1" x1="0.2" y1="0" x2="0.6" y2="1"><stop offset="0" stop-color="#37bdf0"/><stop offset="0.55" stop-color="#1b83d3"/><stop offset="1" stop-color="#0c4fa0"/></linearGradient><linearGradient id="eh1" x1="0" y1="0.5" x2="1" y2="0.3"><stop offset="0" stop-color="#2fb7e6"/><stop offset="1" stop-color="#58d861"/></linearGradient></defs><circle cx="9" cy="9" r="8.5" fill="url(#eg1)"/><path d="M8.5,0.6C13.5,0.4 17.6,4 17.5,8.6C17.4,11.2 15.4,12.6 13.3,12.6C11.2,12.6 10.4,11.4 10.9,10.6C11.7,9.4 11.4,7.2 9,6.6C7.5,6.2 5.5,6.6 4,7.8C4.6,3.6 6.4,1 8.5,0.6Z" fill="url(#eh1)"/><path d="M6.4,9.6C6.2,12.6 8.4,15.6 12,15.6C13.6,15.6 15,15 16.2,14C14.6,16.5 12,17.7 9,17.5C5.2,17.3 2.3,14.8 1.4,11.6C2.6,8.4 5.6,6.2 9,6.6C7.4,7.2 6.5,8.3 6.4,9.6Z" fill="#1560b8"/></svg>
<svg class="a" style="left:632px;top:744px" width="18" height="18" viewBox="0 0 18 18"><defs><linearGradient id="eg2" x1="0.2" y1="0" x2="0.6" y2="1"><stop offset="0" stop-color="#37bdf0"/><stop offset="0.55" stop-color="#1b83d3"/><stop offset="1" stop-color="#0c4fa0"/></linearGradient><linearGradient id="eh2" x1="0" y1="0.5" x2="1" y2="0.3"><stop offset="0" stop-color="#2fb7e6"/><stop offset="1" stop-color="#58d861"/></linearGradient></defs><circle cx="9" cy="9" r="8.5" fill="url(#eg2)"/><path d="M8.5,0.6C13.5,0.4 17.6,4 17.5,8.6C17.4,11.2 15.4,12.6 13.3,12.6C11.2,12.6 10.4,11.4 10.9,10.6C11.7,9.4 11.4,7.2 9,6.6C7.5,6.2 5.5,6.6 4,7.8C4.6,3.6 6.4,1 8.5,0.6Z" fill="url(#eh2)"/><path d="M6.4,9.6C6.2,12.6 8.4,15.6 12,15.6C13.6,15.6 15,15 16.2,14C14.6,16.5 12,17.7 9,17.5C5.2,17.3 2.3,14.8 1.4,11.6C2.6,8.4 5.6,6.2 9,6.6C7.4,7.2 6.5,8.3 6.4,9.6Z" fill="#1560b8"/></svg>
<svg class="a" style="left:467px;top:745px" width="16" height="16" viewBox="0 0 16 16"><g transform="scale(0.86) translate(0.3,0.3)"><circle cx="9" cy="9" r="8.3" fill="#fff"/><path d="M9,9L1.8,4.85A8.3,8.3 0 0 1 16.2,4.85Z" fill="#e33b2e"/><path d="M9,9L16.2,4.85A8.3,8.3 0 0 1 9,17.3Z" fill="#fbc116"/><path d="M9,9L9,17.3A8.3,8.3 0 0 1 1.8,4.85Z" fill="#2da94f"/><path d="M9,4.85H16.2A8.3,8.3 0 0 0 1.8,4.85Z" fill="#e33b2e"/><circle cx="9" cy="9" r="3.9" fill="#fff"/><circle cx="9" cy="9" r="3" fill="#4a8af4"/></g></svg>
<svg class="a" style="left:676px;top:744px" width="16" height="18" viewBox="0 0 16 18"><path d="M2.5,2.5H12.5L13.5,16.5H1.5Z" fill="#d9eef7" stroke="#7aa7bd" stroke-width="0.9"/><path d="M3.5,5.5H12M3.4,7.5H12.2M3.3,9.5H12.4M3.2,11.5H12.6M3.1,13.5H12.8" stroke="#8fc0d6" stroke-width="0.9"/><path d="M3,1V3.5M5,1V3.5M7,1V3.5M9,1V3.5M11,1V3.5" stroke="#444" stroke-width="0.9"/><path d="M13.5,16.5L12.5,2.5L14.5,4L15,15.5Z" fill="#c9b36a" opacity="0.7"/></svg>
<svg class="a" style="left:1226px;top:748px" width="19" height="11" viewBox="0 0 19 11"><rect x="0.75" y="0.75" width="17.5" height="9.5" rx="1.2" fill="none" stroke="#fff" stroke-width="1.5"/><path d="M3,3.5H16M3,5.5H16" stroke="#fff" stroke-width="1" stroke-dasharray="1,1"/><path d="M5,7.8H14" stroke="#fff" stroke-width="1"/></svg>
<svg class="a" style="left:1263px;top:751px" width="11" height="6" viewBox="0 0 11 6"><path d="M0.5,5.5L5.5,0.5L10.5,5.5Z" fill="#fff"/></svg>
<div class="a" style="left:366px;top:142px;width:633px;height:453px;background:#e5668f;box-shadow:inset 0 0 0 1px #d4557e;"></div>
<div class="a" style="left:368px;top:167px;width:628px;height:1px;background:#cf5880;"></div>
<div class="a" style="left:368px;top:167px;width:1px;height:425px;background:#cf5880;"></div>
<div class="a" style="left:369px;top:168px;width:627px;height:424px;background:#f0f0f0;box-shadow:inset -1px -1px 0 #fff;"></div>
<svg class="a" style="left:370px;top:148px" width="18" height="15" viewBox="0 0 18 15"><defs><linearGradient id="dg1" x1="0" y1="0" x2="0.6" y2="1"><stop offset="0" stop-color="#4f7fc0"/><stop offset="0.35" stop-color="#2f8a86"/><stop offset="1" stop-color="#4aa85a"/></linearGradient><linearGradient id="dg2" x1="0" y1="0" x2="0" y2="1"><stop offset="0" stop-color="#5b8fd0"/><stop offset="0.6" stop-color="#7cc47a"/><stop offset="1" stop-color="#f0f6f0"/></linearGradient></defs><rect x="1" y="1" width="15.5" height="12.5" fill="#c9527a"/><rect x="1.5" y="1" width="14.5" height="12" fill="#fafafa" stroke="#cfd8d6" stroke-width="0.8"/><rect x="3" y="3" width="5" height="7.8" fill="url(#dg1)"/><rect x="9.3" y="3" width="2.6" height="7.8" fill="#e4e4e4"/><rect x="13" y="3" width="2" height="4.2" fill="url(#dg2)"/></svg>
<div class="a" style="left:383px;width:600px;top:145px;height:22px;line-height:22px;text-align:center;font-size:15px;color:#2a1a22;letter-spacing:-0.15px">Kategorie RV</div>
<div class="a" style="left:907px;top:156px;width:8px;height:2px;background:#a04a6c;"></div>
<svg class="a" style="left:933px;top:149px" width="10" height="8" viewBox="0 0 10 8"><rect x="0.5" y="0.5" width="9" height="7" fill="none" stroke="#2a1a22"/><rect x="0" y="0" width="10" height="2" fill="#2a1a22"/></svg>
<div class="a" style="left:951px;top:143px;width:45px;height:20px;background:#c75050;"></div>
<svg class="a" style="left:969px;top:150px" width="10" height="8" viewBox="0 0 10 8"><path d="M1,0.3L9,7.7M9,0.3L1,7.7" stroke="#fff" stroke-width="1.7" fill="none"/></svg>
<div class="sunk" style="left:373px;top:170px;width:17px;height:17px"></div>
<div class="a" style="left:409px;top:168px;width:80px;height:19px;background:#fff;box-shadow:inset 1px 1px 0 #a0a0a0,inset -1px -1px 0 #fff,inset 2px 2px 0 #696969"></div>
<div class="btn" style="left:471px;top:170px;width:17px;height:16px"></div>
<svg class="a" style="left:471px;top:170px" width="17" height="16" viewBox="0 0 17 16"><polygon points="4.0,6.0 12.0,6.0 8.0,10.3" fill="#000"/></svg>
<div class="t s" style="left:412px;top:171px">Sprzedaż</div>
<div class="btn" style="left:504px;top:170px;width:63px;height:19px;padding-top:2px"><b>Dodaj</b></div>
<div class="btn" style="left:574px;top:170px;width:55px;height:19px;padding-top:2px"><b>Usuń</b></div>
<div class="btn" style="left:663px;top:170px;width:62px;height:19px;padding-top:2px"><b>Wybierz</b></div>
<div class="btn" style="left:730px;top:170px;width:60px;height:19px;padding-top:2px"><b>Anuluj</b></div>
<div class="a" style="left:369px;top:189px;width:624px;height:383px;background:#fff;"></div>
<div class="a" style="left:369px;top:210px;width:18px;height:362px;background:#c0c0c0;"></div>
<div class="a" style="left:832px;top:210px;width:41px;height:362px;background:#c0c0c0;"></div>
<div class="a" style="left:369px;top:310px;width:624px;height:19px;background:#3399ff;"></div>
<div class="vl" style="left:387px;top:209px;height:363px"></div>
<div class="vl" style="left:405px;top:209px;height:363px"></div>
<div class="vl" style="left:447px;top:209px;height:363px"></div>
<div class="vl" style="left:747px;top:209px;height:363px"></div>
<div class="vl" style="left:831px;top:209px;height:363px"></div>
<div class="vl" style="left:873px;top:209px;height:363px"></div>
<div class="vl" style="left:903px;top:209px;height:363px"></div>
<div class="vl" style="left:921px;top:209px;height:363px"></div>
<div class="vl" style="left:939px;top:209px;height:363px"></div>
<div class="vl" style="left:957px;top:209px;height:363px"></div>
<div class="hl" style="left:369px;top:209px;width:624px"></div>
<div class="hl" style="left:369px;top:229px;width:624px"></div>
<div class="hl" style="left:369px;top:249px;width:624px"></div>
<div class="hl" style="left:369px;top:269px;width:624px"></div>
<div class="hl" style="left:369px;top:289px;width:624px"></div>
<div class="hl" style="left:369px;top:309px;width:624px"></div>
<div class="hl" style="left:369px;top:329px;width:624px"></div>
<div class="hl" style="left:369px;top:349px;width:624px"></div>
<div class="hl" style="left:369px;top:369px;width:624px"></div>
<div class="hl" style="left:369px;top:389px;width:624px"></div>
<div class="hl" style="left:369px;top:409px;width:624px"></div>
<div class="hl" style="left:369px;top:429px;width:624px"></div>
<div class="hl" style="left:369px;top:449px;width:624px"></div>
<div class="hd" style="left:369px;top:189px;width:19px"><span>Z</span></div>
<div class="hd" style="left:388px;top:189px;width:18px"><span>K</span></div>
<div class="hd" style="left:406px;top:189px;width:42px"><span>od</span></div>
<div class="hd" style="left:448px;top:189px;width:300px"><span>Opis</span></div>
<div class="hd" style="left:748px;top:189px;width:84px"><span>Druk</span></div>
<div class="hd" style="left:832px;top:189px;width:42px"><span>Konto</span></div>
<div class="hd" style="left:874px;top:189px;width:30px"><span>k</span></div>
<div class="hd" style="left:904px;top:189px;width:18px"><span>zn</span></div>
<div class="hd" style="left:922px;top:189px;width:18px"><span>P</span></div>
<div class="hd" style="left:940px;top:189px;width:18px"><span>B</span></div>
<div class="hd" style="left:958px;top:189px;width:35px"><span>zapł.</span></div>
<div class="t s" style="left:373px;top:213px;">S</div>
<div class="t s" style="left:391px;top:213px;">0</div>
<div class="t s" style="left:451px;top:213px;width:296px;overflow:hidden;">Sprzedaż ze stawką zero VAT</div>
<div class="t s" style="left:751px;top:213px;">stawka 0%</div>
<div class="t s" style="left:373px;top:233px;">S</div>
<div class="t s" style="left:391px;top:233px;">A</div>
<div class="t s" style="left:451px;top:233px;width:296px;overflow:hidden;">Sprzedaż opodatkowana podatkiem VAT</div>
<div class="t s" style="left:751px;top:233px;">sprzedaż</div>
<div class="t s" style="left:373px;top:253px;">S</div>
<div class="t s" style="left:391px;top:253px;">E</div>
<div class="t s" style="left:451px;top:253px;width:296px;overflow:hidden;">Sprzedaż traktowana jako eksport opodatkowana 0%</div>
<div class="t s" style="left:751px;top:253px;">eksport</div>
<div class="t s" style="left:780.5px;width:300px;text-align:center;top:253px;">X</div>
<div class="t s" style="left:373px;top:273px;">S</div>
<div class="t s" style="left:391px;top:273px;">K</div>
<div class="t s" style="left:451px;top:273px;width:296px;overflow:hidden;">Dostawa usług nie podlegająca opodatkowaniu z prawem do odliczenia</div>
<div class="t s" style="left:751px;top:273px;">Dost.usług</div>
<div class="t s" style="left:373px;top:293px;">S</div>
<div class="t s" style="left:391px;top:293px;">N</div>
<div class="t s" style="left:451px;top:293px;width:296px;overflow:hidden;">Sprzedaż bez VAT należnego</div>
<div class="t s" style="left:751px;top:293px;">bez należn.</div>
<div class="t s" style="left:738.5px;width:300px;text-align:center;top:293px;">B</div>
<div class="t s" style="left:373px;top:313px;color:#fff;">S</div>
<div class="t s" style="left:391px;top:313px;color:#fff;">P</div>
<div class="t s" style="left:407px;top:313px;color:#fff;">2020.10</div>
<div class="t s" style="left:451px;top:313px;width:296px;overflow:hidden;color:#fff;">paragon</div>
<div class="t s" style="left:751px;top:313px;color:#fff;">kasa fiskalna</div>
<div class="t s" style="left:798.5px;width:300px;text-align:center;top:313px;color:#fff;">X</div>
<div class="t s" style="left:373px;top:333px;">S</div>
<div class="t s" style="left:391px;top:333px;">S</div>
<div class="t s" style="left:451px;top:333px;width:296px;overflow:hidden;">Spis z natury</div>
<div class="t s" style="left:751px;top:333px;">spis</div>
<div class="t s" style="left:373px;top:353px;">S</div>
<div class="t s" style="left:391px;top:353px;">T</div>
<div class="t s" style="left:451px;top:353px;width:296px;overflow:hidden;">TaxFree - bez podatku vat</div>
<div class="t s" style="left:751px;top:353px;">TaxFree</div>
<div class="t s" style="left:373px;top:373px;">S</div>
<div class="t s" style="left:391px;top:373px;">U</div>
<div class="t s" style="left:451px;top:373px;width:296px;overflow:hidden;">TaxFree - z vat należnym</div>
<div class="t s" style="left:751px;top:373px;">TaxFree</div>
<div class="t s" style="left:373px;top:393px;">S</div>
<div class="t s" style="left:391px;top:393px;">V</div>
<div class="t s" style="left:451px;top:393px;width:296px;overflow:hidden;">Dostawa towarów, dla której podatnikiem jest nabywca</div>
<div class="t s" style="left:751px;top:393px;">VAT nabywc</div>
<div class="t s" style="left:373px;top:413px;">S</div>
<div class="t s" style="left:391px;top:413px;">W</div>
<div class="t s" style="left:451px;top:413px;width:296px;overflow:hidden;">Wewnatrzwspólnotowa dostawa (eksport)</div>
<div class="t s" style="left:751px;top:413px;">UE dostawa</div>
<div class="t s" style="left:780.5px;width:300px;text-align:center;top:413px;">X</div>
<div class="t s" style="left:373px;top:433px;">S</div>
<div class="t s" style="left:391px;top:433px;">Z</div>
<div class="t s" style="left:451px;top:433px;width:296px;overflow:hidden;">Sprzedaż zwolniona od podatku VAT</div>
<div class="t s" style="left:751px;top:433px;">zwolniona</div>
<div class="a" style="left:369px;top:310px;width:18px;height:19px;border:1px dotted #e8a040;outline:1px dotted #000;outline-offset:-2px;"></div>
<div class="a" style="left:369px;top:572px;width:625px;height:17px;background:#f0f0f0;"></div>
<div class="a" style="left:387px;top:572px;width:17px;height:15px;background:#cdcdcd;"></div>
<svg class="a" style="left:375px;top:575px" width="8" height="9" viewBox="0 0 8 9"><path d="M6,1.2L2.4,4.5L6,7.8" fill="none" stroke="#505050" stroke-width="2.1"/></svg>
<svg class="a" style="left:981px;top:575px" width="8" height="9" viewBox="0 0 8 9"><path d="M2,1.2L5.6,4.5L2,7.8" fill="none" stroke="#505050" stroke-width="2.1"/></svg>
</div></body></html>
